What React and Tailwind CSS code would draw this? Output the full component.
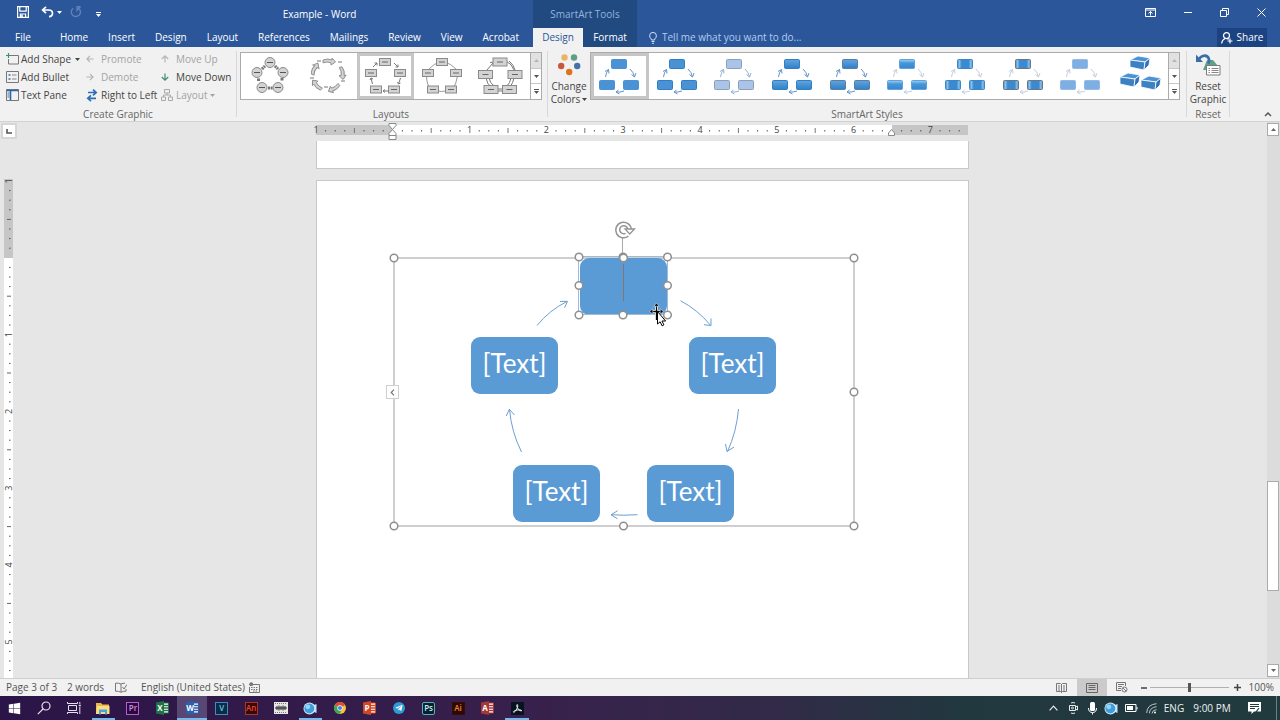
import { useState } from 'react';
import { FaWindows, FaTelegramPlane } from 'react-icons/fa';

const TABS = ['Home', 'Insert', 'Design', 'Layout', 'References', 'Mailings', 'Review', 'View', 'Acrobat'];

/* ---------- title bar icons ---------- */

function SaveIcon() {
  return (
    <svg width="12" height="12" viewBox="0 0 12 12" fill="none" stroke="#fff" strokeWidth="1.2">
      <path d="M.6.6h10.8v10.8H.6z" />
      <path d="M2.8.8v4.4h6.4V.8M3.4 11.2V8h5.2v3.2" />
      <path d="M5 8.6v2.4" strokeWidth="1.6" />
    </svg>
  );
}

function UndoIcon() {
  return (
    <svg width="13" height="12" viewBox="0 0 13 12" fill="none" stroke="#fff" strokeWidth="1.7">
      <path d="M5 .8 1.6 4 5 7.2M2 4h5.6c5.2 0 5 6.2.4 6.6" />
    </svg>
  );
}

function RedoIcon() {
  return (
    <svg width="12" height="12" viewBox="0 0 12 12" fill="none" stroke="#5f82ba" strokeWidth="1.4">
      <path d="M3.2 2.2A4.6 4.6 0 1 0 9 2.6M6.6.8h4M10.4.8 7 4.2V.8" />
    </svg>
  );
}

function Caret({ className = '' }) {
  return (
    <svg width="5" height="3" viewBox="0 0 5 3" className={className}>
      <path d="M0 0h5L2.500 3z" fill="currentColor" />
    </svg>
  );
}

/* ---------- ribbon icons ---------- */

function AddShapeIcon() {
  return (
    <svg width="13" height="12" viewBox="0 0 13 12" fill="none">
      <path d="M5 2.500h7.500v8.500h-10V6" stroke="#777" />
      <path d="M2.500 0v5M0 2.500h5" stroke="#3f8f6b" strokeWidth="1.2" />
    </svg>
  );
}

function AddBulletIcon() {
  return (
    <svg width="13" height="12" viewBox="0 0 13 12" fill="none">
      <path d="M.5.5h12v11H.5z" stroke="#777" />
      <path d="M2.500 4h2M2.500 8h2" stroke="#3f6fae" strokeWidth="1.6" />
      <path d="M6 4h4.500M6 8h4.500" stroke="#888" />
    </svg>
  );
}

function TextPaneIcon() {
  return (
    <svg width="13" height="12" viewBox="0 0 13 12" fill="none">
      <path d="M.5.5h12v11H.5z" stroke="#777" />
      <path d="M.5 1.500h12M4.500 1v10" stroke="#2f64a8" strokeWidth="1.6" />
      <path d="M1.500 4h2M1.500 6h2M1.500 8h2" stroke="#3f6fae" />
    </svg>
  );
}

function ArrowIcon({ turn, color }) {
  return (
    <svg width="8" height="8" viewBox="0 0 8 8" fill="none" stroke={color} strokeWidth="1.2">
      <path d="M7.500 4H1M4 .8.900 4 4 7.200" transform={`rotate(${turn} 4 4)`} />
    </svg>
  );
}

function RightToLeftIcon() {
  return (
    <svg width="12" height="13" viewBox="0 0 12 13" fill="none" stroke="#2f6db5" strokeWidth="1.7">
      <path d="M2 3.500h8M7 .6l3.200 2.900L7 6.400" />
      <path d="M10 9.300H2M5 6.400 1.800 9.300 5 12.200" />
    </svg>
  );
}

function OrgLayoutIcon() {
  return (
    <svg width="12" height="12" viewBox="0 0 12 12" fill="none" stroke="#a9a9a9">
      <path d="M3.500.5h5v3.500h-5zM.5 8h4v3.500h-4zM7.500 8h4v3.500h-4zM6 4v2M2.500 8V6h7v2" />
    </svg>
  );
}

function ChangeColorsIcon() {
  return (
    <svg width="24" height="24" viewBox="0 0 24 24">
      <circle cx="7.500" cy="4.500" r="3.200" fill="#e8b565" />
      <circle cx="17" cy="4.500" r="3.200" fill="#5f9f87" />
      <circle cx="4.200" cy="13" r="3.200" fill="#c9583b" />
      <circle cx="20.200" cy="13" r="3.200" fill="#4472a8" />
      <circle cx="12.200" cy="19" r="3.200" fill="#e0721f" />
    </svg>
  );
}

function ResetGraphicIcon() {
  return (
    <svg width="26" height="24" viewBox="0 0 26 24" fill="none">
      <path d="M12 7h6l5 6v4H8z" fill="#5fa184" />
      <path d="M3.500 7C6 2 12 .8 14 6c.6 2-.2 3.600-1 4.500" stroke="#3a6ea8" strokeWidth="2.600" />
      <path d="M1 1.500v7.500h7z" fill="#3a6ea8" />
      <path d="M11.500 12.500h13.500v9.500H11.500z" fill="#fff" stroke="#7a7a7a" />
      <path d="M13.500 15.500h1.500M16.500 15.500h7M13.500 17.500h1.500M16.500 17.500h7M13.500 19.500h1.500M16.500 19.500h7" stroke="#888" />
    </svg>
  );
}

/* ---------- layout gallery thumbnails ---------- */

function Boxes({ points, w, h }) {
  return points.map(([x, y]) => (
    <g key={`${x}-${y}`}>
      <rect x={x - w / 2} y={y - h / 2} width={w} height={h} fill="#d3d3d3" stroke="#8a8a8a" />
      <path d={`M${x - 3} ${y}h6`} stroke="#666" />
    </g>
  ));
}

function CircleCycle() {
  const dots = [[29, 9.5], [16, 19.5], [42, 19.5], [21, 34.5], [37, 34.5]];
  return (
    <>
      <path d="M21 16l3-3M34 13l3 3M17.500 28v-3M41 25v3M27 35h5" stroke="#777" strokeWidth="3" strokeDasharray="2 .6" />
      {dots.map(([x, y]) => (
        <g key={`${x}-${y}`}>
          <circle cx={x} cy={y} r="5" fill="#d3d3d3" stroke="#8a8a8a" />
          <path d={`M${x - 3} ${y}h6`} stroke="#555" />
        </g>
      ))}
    </>
  );
}

function ArrowCycle() {
  const arrow = 'M-6-1.500q5-2 9 0V-3.500L6.500.5 2 3.500V1.300q-4-1.600-8 0z';
  return (
    <>
      <g fill="#d3d3d3" stroke="#8a8a8a" strokeWidth=".9">
        <path d={arrow} transform="translate(30 8.500)" />
        <path d={arrow} transform="translate(43 20) rotate(76)" />
        <path d={arrow} transform="translate(35 35) rotate(144)" />
        <path d={arrow} transform="translate(18 32) rotate(222)" />
        <path d={arrow} transform="translate(16 16) rotate(292)" />
      </g>
      <path d="M18 8h4M39 9h4M11 25h4M42 28h4M25 34h4" stroke="#777" />
    </>
  );
}

function BasicCycle() {
  return (
    <>
      <g fill="none" stroke="#777">
        <path d="M16 14l4-4M20 12.500V10h-2.500M37 10l4 4M41 11.500V14h-2.500M43.500 25l-2 6M40.500 29l1 2 2-1M15.500 31l-1.500-6M13 27l1-2 2 1M31 38h-5M28 36.500 26 38l2 1.500" />
      </g>
      <Boxes points={[[28, 9], [14, 20], [43, 20], [19, 36.5], [37, 36.5]]} w={11} h={7} />
    </>
  );
}

function BlockCycle() {
  return (
    <>
      <path d="M15 16Q19 11 28 8q10 3 14 8M12.500 23q0 9 5 14 10 3 20 0 5-5 6-14" fill="none" stroke="#999" />
      <Boxes points={[[28, 9], [14, 20], [42, 20], [19, 36.5], [37, 36.5]]} w={11} h={7} />
    </>
  );
}

function ContinuousCycle() {
  return (
    <>
      <path d="M15 17l6-7M18 9.500l4-.5-1 4M34 8q6 3 8 9M37 8q5 4 6 9M14 25q1 6 5 9M17 25q1 5 5 8M42 25q-1 5-4 9M39 25q-1 5-4 8M25 38h8M25 36h8" fill="none" stroke="#777" />
      <Boxes points={[[28, 9], [13.5, 21.5], [43, 21.5], [19, 36.5], [37.500, 36.5]]} w={14} h={8} />
    </>
  );
}

const LAYOUTS = [
  { name: 'Basic Cycle', Art: CircleCycle },
  { name: 'Text Cycle', Art: ArrowCycle },
  { name: 'Nondirectional Cycle', Art: BasicCycle },
  { name: 'Block Cycle', Art: BlockCycle },
  { name: 'Continuous Cycle', Art: ContinuousCycle },
];

/* ---------- style gallery thumbnails ---------- */

const STYLES = [
  { name: 'Simple Fill', fill: '#4a92d4', stroke: '#4a92d4', arrow: '#5f95c8' },
  { name: 'White Outline', fill: '#4a92d4', stroke: '#2f7fc8', arrow: '#5f95c8' },
  { name: 'Subtle Effect', fill: '#a9c4e8', stroke: '#8e9fb8', arrow: '#8fb3d9' },
  { name: 'Moderate Effect', fill: 'url(#blueFade)', stroke: '#2f80c6', arrow: '#5f95c8' },
  { name: 'Intense Effect', fill: 'url(#blueFade)', stroke: '#5c7f9f', arrow: '#5f95c8' },
  { name: 'Polished', fill: 'url(#gloss)', stroke: '#5ba3dc', arrow: '#c3cede' },
  { name: 'Inset', fill: 'url(#edgeGloss)', stroke: '#3b86c8', arrow: '#c3cede' },
  { name: 'Cartoon', fill: 'url(#edgeGloss)', stroke: '#6b7681', arrow: '#c3cede' },
  { name: 'Powder', fill: '#7dafe4', stroke: '#94b9e4', arrow: '#c3cede' },
  { name: 'Brick Scene', brick: true },
];

function StyleArt({ fill, stroke, arrow, brick }) {
  if (brick) {
    return [[29, 10], [19, 27], [40, 30]].map(([x, y]) => (
      <g key={x} transform={`translate(${x} ${y})`}>
        <path d="M-9-3-1-7 11-5 6-1z" fill="#4d93d2" stroke="#fff" strokeWidth=".8" />
        <path d="M-9-3 6-1 5 7-9 4z" fill="#3c81c4" stroke="#fff" strokeWidth=".8" />
        <path d="M6-1 11-5 10 2 5 7z" fill="#3273b4" stroke="#fff" strokeWidth=".8" />
      </g>
    ));
  }
  return (
    <>
      {[[28, 11], [16, 32], [40, 32]].map(([x, y]) => (
        <rect key={x} x={x - 7.5} y={y - 4.5} width="15" height="9" rx="1" fill={fill} stroke={stroke} />
      ))}
      <path
        d="M14.500 24q.5-4.500 3-7.500M14 18.500l3.500-2 .5 4M39 16q3.500 3 4.500 8M40.500 21.500l3 2.500 1.500-4M33 38q-4 1.500-8 1M27.500 37 25 39l3.500 2"
        fill="none"
        stroke={arrow}
      />
    </>
  );
}

function Gradients() {
  return (
    <svg width="0" height="0" className="absolute">
      <defs>
        <linearGradient id="blueFade" x1="0" y1="0" x2="0" y2="1">
          <stop offset="0" stopColor="#62a5de" />
          <stop offset="1" stopColor="#2f7fc9" />
        </linearGradient>
        <linearGradient id="gloss" x1="0" y1="0" x2="0" y2="1">
          <stop offset="0" stopColor="#a4d0ef" />
          <stop offset=".4" stopColor="#4496da" />
          <stop offset="1" stopColor="#3b86cb" />
        </linearGradient>
        <linearGradient id="edgeGloss">
          <stop offset="0" stopColor="#3a83c6" />
          <stop offset=".12" stopColor="#8fc3ea" />
          <stop offset=".28" stopColor="#3b8ad0" />
          <stop offset=".75" stopColor="#3b8ad0" />
          <stop offset=".9" stopColor="#8fc3ea" />
          <stop offset="1" stopColor="#3a83c6" />
        </linearGradient>
      </defs>
    </svg>
  );
}

function Gallery({ items, active, onPick, render }) {
  return (
    <div className="flex h-[48px] min-w-0 flex-1 border border-[#ababab] bg-white">
      <div className="flex min-w-0 flex-1">
        {items.map((item, i) => (
          <button
            key={item.name}
            aria-label={item.name}
            onClick={() => onPick(i)}
            className={`flex min-w-0 flex-1 items-center justify-center border-3 ${
              i === active ? 'border-[#c6c6c6]' : 'border-transparent'
            }`}
          >
            <svg width="58" height="46" viewBox="0 0 58 46" className="shrink-0">
              {render(item)}
            </svg>
          </button>
        ))}
      </div>
      <div className="flex w-[11px] shrink-0 flex-col border-l border-[#ababab] text-[#555]">
        <button aria-label="Scroll up" className="flex flex-1 items-center justify-center bg-[#e1e1e1] text-[#b5b5b5]">
          <Caret className="rotate-180" />
        </button>
        <button aria-label="Scroll down" className="flex flex-1 items-center justify-center border-y border-[#c6c6c6]">
          <Caret />
        </button>
        <button aria-label="More" className="flex flex-1 flex-col items-center justify-center gap-px">
          <span className="h-px w-[5px] bg-[#555]" />
          <Caret />
        </button>
      </div>
    </div>
  );
}

function Command({ icon, label, disabled, caret }) {
  return (
    <button
      disabled={disabled}
      className="flex h-[18px] items-center whitespace-nowrap text-[#444] disabled:text-[#a3a3a3]"
    >
      <span className="flex w-[15px] shrink-0 items-center">{icon}</span>
      {label}
      {caret && <Caret className={caret} />}
    </button>
  );
}

function Separator() {
  return <div className="my-1 w-px shrink-0 bg-[#d8d8d8]" />;
}

function GroupLabel({ children }) {
  return <div className="mt-auto text-center leading-[13px] text-[#666]">{children}</div>;
}

function TitleBar() {
  return (
    <div className="flex h-7 text-[10px] text-white">
      <div className="flex w-[106px] shrink-0 items-center pb-1 pl-[17px]">
        <button aria-label="Save"><SaveIcon /></button>
        <button aria-label="Undo" className="ml-3"><UndoIcon /></button>
        <button aria-label="Undo history" className="ml-[3px]"><Caret /></button>
        <button aria-label="Redo" className="ml-2"><RedoIcon /></button>
        <button aria-label="Customize" className="ml-[14px] flex flex-col items-center gap-px pt-1">
          <span className="h-px w-[5px] bg-white" />
          <Caret />
        </button>
      </div>
      <div className="w-[427px] shrink-0 text-center leading-7">Example - Word</div>
      <div className="w-[104px] shrink-0 bg-[#214a80] text-center leading-7 text-[#94b4de]">SmartArt Tools</div>
      <div className="flex flex-1 items-center justify-end pb-1">
        <button aria-label="Ribbon display options" className="flex w-[37px] justify-center">
          <svg width="11" height="9" viewBox="0 0 11 9" fill="none" stroke="#fff">
            <path d="M.5.5h10v8H.5zM.5 2h10M5.500 7.500v-4M3.500 5.500l2-2 2 2" />
          </svg>
        </button>
        <button aria-label="Minimize" className="flex w-[37px] justify-center">
          <span className="h-px w-2 bg-white" />
        </button>
        <button aria-label="Restore" className="flex w-[37px] justify-center">
          <svg width="9" height="9" viewBox="0 0 9 9" fill="none" stroke="#fff">
            <path d="M.5 2.500h6v6h-6zM2.500 2.500v-2h6v6h-2" />
          </svg>
        </button>
        <button aria-label="Close" className="flex w-[37px] justify-center">
          <svg width="9" height="9" viewBox="0 0 9 9" fill="none" stroke="#fff">
            <path d="M.5.5l8 8M8.500.5l-8 8" />
          </svg>
        </button>
      </div>
    </div>
  );
}

function TabBar() {
  return (
    <div className="flex h-[19px] text-[10px] leading-[19px] text-white">
      <div className="flex w-[533px] shrink-0 justify-between pr-[14px]">
        <button className="w-[40px] pl-[15px] text-left">File</button>
        {TABS.map((tab) => (
          <button key={tab}>{tab}</button>
        ))}
      </div>
      <button className="w-[50px] shrink-0 bg-[#f1f1f1] text-[#2b579a]">Design</button>
      <button className="w-[54px] shrink-0 bg-[#214a80]">Format</button>
      <label className="flex items-center gap-[5px] pl-3 text-[#b4cbee]">
        <svg width="8" height="12" viewBox="0 0 8 12" fill="none" stroke="#cfe0f8">
          <path d="M2.500 8C2.500 6.500.6 6 .6 3.800a3.400 3.400 0 0 1 6.800 0C7.400 6 5.500 6.500 5.500 8zM2.500 9.500h3M3 11.300h2" />
        </svg>
        <input
          aria-label="Tell me what you want to do"
          placeholder="Tell me what you want to do..."
          className="w-[150px] bg-transparent placeholder:text-[#b4cbee]"
        />
      </label>
      <button className="mr-[13px] ml-auto flex w-[50px] items-center justify-center gap-1 bg-[#1b4381]">
        <svg width="12" height="12" viewBox="0 0 12 12" fill="none" stroke="#fff" strokeWidth="1.2">
          <circle cx="5.500" cy="3.600" r="3" />
          <path d="M.6 11.500Q1 8 4 6.500M9 6.500v5M6.500 9h5M6.500 6.500l1 1" />
        </svg>
        Share
      </button>
    </div>
  );
}

function Ribbon() {
  const [layout, setLayout] = useState(2);
  const [style, setStyle] = useState(0);

  return (
    <div className="flex h-[75px] shrink-0 border-b border-[#d2d2d2] bg-[#f1f1f1] text-[10px]">
      <div className="flex w-[236px] shrink-0 flex-col pt-[3px]">
        <div className="flex pl-[6px]">
          <div className="w-[80px]">
            <Command icon={<AddShapeIcon />} label="Add Shape" caret="ml-[4px]" />
            <Command icon={<AddBulletIcon />} label="Add Bullet" />
            <Command icon={<TextPaneIcon />} label="Text Pane" />
          </div>
          <div className="w-[75px]">
            <Command icon={<ArrowIcon turn={0} color="#b5b5b5" />} label="Promote" disabled />
            <Command icon={<ArrowIcon turn={180} color="#b5b5b5" />} label="Demote" disabled />
            <Command icon={<RightToLeftIcon />} label="Right to Left" />
          </div>
          <div>
            <Command icon={<ArrowIcon turn={90} color="#b5b5b5" />} label="Move Up" disabled />
            <Command icon={<ArrowIcon turn={270} color="#3f8f6b" />} label="Move Down" />
            <Command icon={<OrgLayoutIcon />} label="Layout" disabled caret="ml-[2px]" />
          </div>
        </div>
        <GroupLabel>Create Graphic</GroupLabel>
      </div>
      <Separator />
      <div className="flex w-[310px] shrink-0 flex-col pt-[5px] pr-[5px] pl-[3px]">
        <div className="flex">
          <Gallery items={LAYOUTS} active={layout} onPick={setLayout} render={({ Art }) => <Art />} />
        </div>
        <GroupLabel>Layouts</GroupLabel>
      </div>
      <Separator />
      <div className="flex min-w-0 flex-1 flex-col pt-[5px]">
        <div className="flex items-start pr-[6px]">
          <button className="flex w-[42px] shrink-0 flex-col items-center pt-px leading-[13px] text-[#444]">
            <ChangeColorsIcon />
            <span className="pt-[3px]">Change</span>
            <span className="flex items-center gap-[2px]">Colors <Caret /></span>
          </button>
          <Gallery items={STYLES} active={style} onPick={setStyle} render={(item) => <StyleArt {...item} />} />
        </div>
        <GroupLabel>SmartArt Styles</GroupLabel>
      </div>
      <Separator />
      <div className="flex w-[42px] shrink-0 flex-col pt-[5px]">
        <button className="flex flex-col items-center pt-px leading-[13px] text-[#444]">
          <ResetGraphicIcon />
          <span className="pt-[3px]">Reset</span>
          <span>Graphic</span>
        </button>
        <GroupLabel>Reset</GroupLabel>
      </div>
      <Separator />
      <div className="flex w-[50px] shrink-0 items-end justify-end pr-2 pb-1">
        <button aria-label="Collapse the ribbon">
          <svg width="8" height="6" viewBox="0 0 8 6" fill="none" stroke="#555" strokeWidth="1.500">
            <path d="M1 5l3-3 3 3" />
          </svg>
        </button>
      </div>
    </div>
  );
}

/* ---------- rulers ---------- */

const STEP = 9.6;

function HorizontalRuler() {
  const marks = Array.from({ length: 68 }, (_, i) => i).filter((i) => i !== 8 && i !== 60);
  return (
    <svg width="653" height="10" className="block shrink-0 overflow-visible">
      <rect width="652" height="10" fill="#c6c6c6" />
      <rect x="76" width="500" height="10" fill="#fff" />
      {marks.map((i) => {
        const x = i * STEP;
        if (i % 8 === 0) {
          return (
            <text key={i} x={x} y="8" textAnchor="middle" fontSize="9" fill="#444">
              {Math.abs(i / 8 - 1)}
            </text>
          );
        }
        return i % 8 === 4
          ? <path key={i} d={`M${x} 3v5`} stroke="#777" />
          : <path key={i} d={`M${x} 5v1.500`} stroke="#555" />;
      })}
      <g fill="#fff" stroke="#888">
        <path d="M73-1.500h7v2l-3.500 4-3.500-4zM76.500 4.500l3.500 4v2h-7v-2zM73 10.500h7v4h-7z" />
        <path d="M575.500 4.500l3 3.500v2.500h-6V8z" />
      </g>
    </svg>
  );
}

function VerticalRuler() {
  const marks = Array.from({ length: 52 }, (_, i) => i).filter((i) => i !== 8);
  return (
    <div className="min-h-0 flex-1 overflow-hidden pt-2 pl-1">
      <svg width="9" height="1060" className="block overflow-visible">
        <rect width="9" height="1060" fill="#fff" />
        <rect width="9" height="79" fill="#c6c6c6" />
        {marks.map((i) => {
          const y = 2 + i * STEP;
          if (i % 8 === 0) {
            return (
              <text key={i} x="8" y={y} transform={`rotate(-90 8 ${y})`} textAnchor="middle" fontSize="9" fill="#444">
                {Math.abs(i / 8 - 1)}
              </text>
            );
          }
          return i % 8 === 4
            ? <path key={i} d={`M3 ${y}h4`} stroke="#666" />
            : <path key={i} d={`M5 ${y}h1.500`} stroke="#555" />;
        })}
      </svg>
    </div>
  );
}

/* ---------- diagram ---------- */

const NODES = [
  { text: '', pos: 'left-[263px] top-[77px]' },
  { text: '[Text]', pos: 'left-[372px] top-[156px]' },
  { text: '[Text]', pos: 'left-[330px] top-[284px]' },
  { text: '[Text]', pos: 'left-[196px] top-[284px]' },
  { text: '[Text]', pos: 'left-[154px] top-[156px]' },
];

const FRAME_HANDLES = [[394, 258], [854, 258], [854, 392], [854, 526], [623.5, 526], [394, 526]];
const NODE_HANDLES = [
  [579, 257], [623, 257], [667.5, 257],
  [579, 285.5], [667.5, 285.5],
  [579, 315], [623, 315], [667.5, 315],
];

function Diagram() {
  return (
    <>
      <div className="absolute top-[76px] left-[76px] h-[270px] w-[462px] border-2 border-[#cfcfcf]" />
      {NODES.map(({ text, pos }) => (
        <div
          key={pos}
          className={`absolute flex h-[57px] w-[87px] items-center justify-center rounded-[9px] bg-[#5b9bd5] pb-[5px] font-['Lato',sans-serif] text-[26px] leading-8 text-white ${pos}`}
        >
          {text}
        </div>
      ))}
      <svg
        width="651"
        height="496"
        viewBox="317 181 651 496"
        fill="none"
        className="pointer-events-none absolute top-0 left-0"
      >
        <g stroke="#6ba0d0">
          <path d="M537 325.500q12-15 30-24M560 301.500l7.500-.2-3 6.500" />
          <path d="M680.500 300.700q17 9 30 24.500M711 318.500v7l-7-.8" />
          <path d="M738.500 409q-2 23-11 42.500M725.500 444l1.500 7.500 7-4.500" />
          <path d="M637.500 514.700q-14 1-26.500 0M617.500 510.800l-6.500 4 6.500 4" />
          <path d="M521.500 452q-10-20-12-42.500M506.300 416l3-6.700 5.200 5.700" />
        </g>
        <path d="M578.500 256.500h89v58h-89z" stroke="#fff" />
        <path d="M578.500 256.500h89v58h-89z" stroke="#3f78ab" strokeDasharray="1 1" />
        <path d="M623.500 264v37" stroke="#85756c" />
        <path d="M622.500 238v18" stroke="#ababab" />

        {/* rotate handle */}
        <path d="M628.500 236a7.800 7.800 0 1 1 2.800-6.500" stroke="#949494" strokeWidth="1.500" />
        <path d="M625.500 233.300a4 4 0 1 1 2.200-3.600" stroke="#949494" strokeWidth="1.500" />
        <path d="M625 229h9.500l-4.700 5z" fill="#fff" stroke="#949494" strokeWidth="1.300" />

        <g fill="#fff" stroke="#8f8f8f" strokeWidth="1.500">
          {NODE_HANDLES.map(([x, y]) => (
            <circle key={`${x}-${y}`} cx={x} cy={y} r="3.800" />
          ))}
          {FRAME_HANDLES.map(([x, y]) => (
            <circle key={`${x}-${y}`} cx={x} cy={y} r="3.800" />
          ))}
          <circle cx="623.500" cy="258" r="3.800" />
        </g>

        {/* move pointer */}
        <g stroke="#fff" strokeWidth="3">
          <path d="M656.500 305v14M651 311.500h11" />
        </g>
        <path d="M656.500 306v14M651 311.500h11" stroke="#000" strokeWidth="1.300" />
        <path d="M656.500 303l2.600 3.300h-5.200zM649.500 311.500l3.300-2.600v5.200zM663.500 311.500l-3.300-2.600v5.200z" fill="#000" stroke="#fff" strokeWidth=".5" />
        <path d="M657.500 311.500v12.500l2.600-2.200 2 4 1.800-.9-1.900-3.900h3.600z" fill="#fff" stroke="#000" />
      </svg>
      <button
        aria-label="Open text pane"
        className="absolute top-[204px] left-[69px] flex h-[14px] w-[13px] items-center justify-center border border-[#cfcfcf] bg-white"
      >
        <svg width="5" height="7" viewBox="0 0 5 7" fill="none" stroke="#777" strokeWidth="1.200">
          <path d="M4 .6 1.200 3.500 4 6.400" />
        </svg>
      </button>
    </>
  );
}

function Workspace() {
  return (
    <div className="flex min-h-0 flex-1 bg-[#e6e6e6]">
      <div className="flex w-[18px] shrink-0 flex-col pt-px">
        <button
          aria-label="Tab selector"
          className="mb-8 flex h-4 w-4 shrink-0 items-center justify-center self-center border-2 border-[#d6d6d6] bg-white"
        >
          <svg width="6" height="5" viewBox="0 0 6 5" fill="none" stroke="#555" strokeWidth="1.600">
            <path d="M1 0v4h5" />
          </svg>
        </button>
        <VerticalRuler />
      </div>

      <div className="flex min-w-0 flex-1 flex-col items-center overflow-hidden pt-[3px]">
        <HorizontalRuler />
        <div className="mt-[6px] h-[28px] w-[653px] shrink-0 border border-t-0 border-[#c8c8c8] bg-white" />
        <div className="relative mt-[11px] min-h-0 w-[653px] flex-1 overflow-hidden border border-b-0 border-[#c8c8c8] bg-white">
          <Diagram />
        </div>
      </div>

      <div className="flex w-[13px] shrink-0 flex-col bg-[#dcdcdc] py-px pr-px text-[#666]">
        <button aria-label="Scroll up" className="flex h-[13px] items-center justify-center border border-[#ababab] bg-white">
          <Caret className="rotate-180" />
        </button>
        <div className="flex-[346]" />
        <div className="h-[110px] border border-[#ababab] bg-white" />
        <div className="flex-[73]" />
        <button aria-label="Scroll down" className="flex h-[13px] items-center justify-center border border-[#ababab] bg-white">
          <Caret />
        </button>
      </div>
    </div>
  );
}

function StatusBar() {
  const [zoom, setZoom] = useState(50);
  return (
    <div className="flex h-[18px] shrink-0 items-center border-t border-[#cfcfcf] bg-[#f1f1f1] pr-[6px] pl-[6px] text-[10px] whitespace-nowrap text-[#555]">
      <div className="w-[61px]">Page 3 of 3</div>
      <div className="w-[48px]">2 words</div>
      <button aria-label="Proofing" className="w-[26px]">
        <svg width="12" height="11" viewBox="0 0 12 11" fill="none" stroke="#777">
          <path d="M6 2v8M6 2Q4 .8.500 1.200v8Q4 9 6 10.300 8 9 11 9.200V7M6 2q2-1 4-.8M7.500 5l1.500 2L12 2.500" />
        </svg>
      </button>
      <div className="w-[108px]">English (United States)</div>
      <button aria-label="Macro recording">
        <svg width="11" height="11" viewBox="0 0 11 11" fill="none" stroke="#777">
          <path d="M4 2.500h6.500v8H.5V5" />
          <circle cx="2.200" cy="2.200" r="2" fill="#777" stroke="none" />
          <path d="M2 5.500h7M2 7.500h7M4 9h5" strokeDasharray="1.500 1" />
        </svg>
      </button>
      <div className="ml-auto flex h-full items-center">
        <button aria-label="Read mode" className="flex h-full w-[31px] items-center justify-center">
          <svg width="11" height="10" viewBox="0 0 11 10" fill="none" stroke="#777">
            <path d="M5.500 1v9M.5.5h4l1 1 1-1h4v8h-4l-1 1-1-1h-4zM2 3h2M2 5h2M2 7h2M7 3h2M7 5h2M7 7h2" />
          </svg>
        </button>
        <button aria-label="Print layout" className="flex h-full w-[30px] items-center justify-center bg-[#cbcbcb]">
          <svg width="12" height="10" viewBox="0 0 12 10" fill="none" stroke="#666">
            <path d="M.5.5h11v9H.5zM2.500 2.500h7M2.500 4.500h7M2.500 6.500h7" />
          </svg>
        </button>
        <button aria-label="Web layout" className="flex h-full w-[29px] items-center justify-center">
          <svg width="12" height="11" viewBox="0 0 12 11" fill="none" stroke="#777">
            <path d="M5 8.500H.5v-8h9V4M2 2.500h6M2 4.500h4M2 6.500h3" />
            <circle cx="8.500" cy="7.500" r="2.500" />
            <path d="M7 6l3 3" />
          </svg>
        </button>
        <button aria-label="Zoom out" className="flex w-3 justify-center pl-1">
          <svg width="6" height="2"><path d="M0 1h6" stroke="#444" strokeWidth="1.500" /></svg>
        </button>
        <input
          type="range"
          aria-label="Zoom"
          value={zoom}
          onChange={(e) => setZoom(e.target.value)}
          className="mx-[2px] h-3 w-[79px] appearance-none bg-[linear-gradient(#b0b0b0,#b0b0b0)] bg-[length:100%_1px] bg-center bg-no-repeat [&::-webkit-slider-thumb]:h-[9px] [&::-webkit-slider-thumb]:w-[3px] [&::-webkit-slider-thumb]:appearance-none [&::-webkit-slider-thumb]:bg-[#555]"
        />
        <button aria-label="Zoom in" className="flex w-3 justify-center">
          <svg width="7" height="7"><path d="M0 3.500h7M3.500 0v7" stroke="#444" strokeWidth="1.500" /></svg>
        </button>
        <div className="w-[31px] text-right">100%</div>
      </div>
    </div>
  );
}

/* ---------- taskbar ---------- */

function Tile({ text, className }) {
  return (
    <span className={`flex h-[13px] w-[13px] items-center justify-center border text-[8px] leading-none font-semibold ${className}`}>
      {text}
    </span>
  );
}

function OfficeIcon({ letter, color }) {
  return (
    <svg width="13" height="14" viewBox="0 0 13 14">
      <path d="M7 2h5.500v10H7z" fill="#fff" stroke={color} />
      <path d="M8 4.500h4M8 7h4M8 9.500h4" stroke={color} strokeWidth="1.300" />
      <path d="M0 1.500 8 0v14L0 12.500z" fill={color} />
      <text x="4" y="10" textAnchor="middle" fontSize="8" fontWeight="700" fill="#fff">{letter}</text>
    </svg>
  );
}

function SearchIcon() {
  return (
    <svg width="14" height="14" viewBox="0 0 14 14" fill="none" stroke="#e8e2f0" strokeWidth="1.200">
      <circle cx="9" cy="5" r="4" />
      <path d="M6 8 .8 13.200" />
    </svg>
  );
}

function TaskViewIcon() {
  return (
    <svg width="14" height="12" viewBox="0 0 14 12" fill="none" stroke="#e8e2f0">
      <path d="M1.500 3.500h8v5h-8zM.5 0v1.500h10V0M.5 12v-1.500h10V12M12.800 0v2M12.800 5v7" />
      <path d="M11.800 3.500h2" strokeWidth="1.600" />
    </svg>
  );
}

function FolderIcon() {
  return (
    <svg width="14" height="13" viewBox="0 0 14 13">
      <path d="M0 1h5l1.500 1.500H13V12H0z" fill="#e9b949" />
      <path d="M1 4h12.500v8H0z" fill="#fbdc83" />
      <path d="M3 12.500V7.500h8v5H9V10H5v2.500z" fill="#4aa3dc" />
    </svg>
  );
}

function CameraBall() {
  return (
    <svg width="14" height="13" viewBox="0 0 14 13">
      <path d="M10 3.500 13.500 2v9L10 9.500z" fill="#bfe4f8" />
      <circle cx="6.500" cy="6.500" r="6" fill="#d3ecfa" />
      <circle cx="6.300" cy="6.500" r="5" fill="#3f9fde" />
      <circle cx="4.800" cy="4.800" r="2.400" fill="#9ad4f5" />
    </svg>
  );
}

function ChromeIcon() {
  return (
    <svg width="12" height="12" viewBox="0 0 12 12">
      <circle cx="6" cy="6" r="6" fill="#f3c433" />
      <path d="M6 6 .8 3A6 6 0 0 1 11.200 3z" fill="#de4b3c" />
      <path d="M6 6 .8 3A6 6 0 0 0 5.600 12L8 7z" fill="#3fa35a" />
      <circle cx="6" cy="6" r="2.700" fill="#fff" />
      <circle cx="6" cy="6" r="2.100" fill="#4a86e0" />
    </svg>
  );
}

function SubtitleIcon() {
  return (
    <svg width="14" height="12" viewBox="0 0 14 12">
      <path d="M0 0h14v12H0z" fill="#e6e6e6" />
      <path d="M1 1.500h12M1 10.500h12" stroke="#777" strokeDasharray="1 1" />
      <path d="M1 6h12M3 4v4M5 3.500v5M7 4v4M9 3.500v5M11 4v4" stroke="#222" />
    </svg>
  );
}

function AcrobatIcon() {
  return (
    <svg width="13" height="13" viewBox="0 0 13 13" fill="none">
      <path d="M0 0h13v13H0z" fill="#07131f" />
      <path d="M6 2.500q1.500 0 .5 3Q5 9 2.800 10.500 1.500 10 3.500 8.800 6.500 7.500 10 8q1.500.8 0 1-2.500-.5-4-4-.6-2.500 0-2.500z" stroke="#fff" strokeWidth=".9" />
    </svg>
  );
}

const APPS = [
  { name: 'Start', icon: <FaWindows size={13} color="#fff" /> },
  { name: 'Search', icon: <SearchIcon /> },
  { name: 'Task View', icon: <TaskViewIcon /> },
  { name: 'File Explorer', icon: <FolderIcon />, open: true },
  { name: 'Premiere Pro', icon: <Tile text="Pr" className="border-[#b45fd0] bg-[#2c0a3c] text-[#d58ae8]" /> },
  { name: 'Excel', icon: <OfficeIcon letter="X" color="#1f7246" /> },
  { name: 'Word', icon: <OfficeIcon letter="W" color="#2b5fb0" />, focused: true },
  { name: 'VEGAS', icon: <Tile text="V" className="border-[#3d8ec0] bg-[#0b2c44] text-[#69c4ee]" /> },
  { name: 'Animate', icon: <Tile text="An" className="border-[#a93428] bg-[#3a0808] text-[#e04a35]" /> },
  { name: 'Subtitle Edit', icon: <SubtitleIcon /> },
  { name: 'Recorder', icon: <CameraBall />, open: true },
  { name: 'Chrome', icon: <ChromeIcon /> },
  { name: 'PowerPoint', icon: <OfficeIcon letter="P" color="#d04727" /> },
  {
    name: 'Telegram',
    icon: (
      <span className="flex h-3 w-3 items-center justify-center rounded-full bg-[#2f9bd6]">
        <FaTelegramPlane size={8} color="#fff" />
      </span>
    ),
  },
  { name: 'Photoshop', icon: <Tile text="Ps" className="rounded-xs border-[#4fb3bf] bg-[#06202c] text-[#c8eef5]" /> },
  { name: 'Illustrator', icon: <Tile text="Ai" className="border-[#3a0b05] bg-[#2d0805] text-[#f08a24]" /> },
  { name: 'Access', icon: <OfficeIcon letter="A" color="#a4373a" /> },
  { name: 'Acrobat', icon: <AcrobatIcon />, open: true },
];

function Taskbar() {
  return (
    <div className="flex h-6 shrink-0 bg-[linear-gradient(90deg,#2b1447_0%,#38204c_40%,#322a48_60%,#21383f_75%,#213a3d_100%)] text-[10px] text-[#eef2f2]">
      <div className="grid w-[532px] shrink-0 grid-cols-18">
        {APPS.map(({ name, icon, open, focused }) => (
          <button
            key={name}
            aria-label={name}
            className={`flex items-center justify-center border-b-2 pt-[2px] ${
              focused ? 'border-[#76b9ed] bg-[#584673]' : open ? 'mx-[3px] border-[#76b9ed]' : 'border-transparent'
            }`}
          >
            {icon}
          </button>
        ))}
      </div>
      <div className="ml-auto flex items-center">
        <button aria-label="Hidden icons" className="flex w-5 justify-center">
          <svg width="9" height="6" viewBox="0 0 9 6" fill="none" stroke="#e6ecec" strokeWidth="1.200">
            <path d="M.6 5.300 4.500 1.200l3.900 4.100" />
          </svg>
        </button>
        <button aria-label="Screen recorder" className="flex w-5 justify-center">
          <svg width="9" height="12" viewBox="0 0 9 12" fill="none" stroke="#e6ecec">
            <path d="M.5 3.500h6v5h-6zM6.500 5 8.500 4v4l-2-1M2 1q2-1 4 0M2 11q2 1 4 0" />
            <circle cx="3.500" cy="6" r="1" />
          </svg>
        </button>
        <button aria-label="Microphone" className="flex w-[18px] justify-center">
          <svg width="9" height="13" viewBox="0 0 9 13" fill="none" stroke="#fff">
            <rect x="2" y="0" width="5" height="9" rx="1.500" fill="#fff" stroke="none" />
            <path d="M.5 6q0 4.500 4 4.500t4-4.500M4.500 10.500v2" />
          </svg>
        </button>
        <button aria-label="Recorder" className="flex w-5 justify-center"><CameraBall /></button>
        <button aria-label="Battery" className="flex w-5 justify-center">
          <svg width="13" height="8" viewBox="0 0 13 8">
            <path d="M.5.5h10.500v7H.5zM12 3v2.500" fill="none" stroke="#fff" />
            <path d="M2 2h6v4H2z" fill="#fff" />
          </svg>
        </button>
        <button aria-label="Network" className="flex w-5 justify-center">
          <svg width="11" height="11" viewBox="0 0 11 11" fill="none" stroke="#b9c6c6">
            <path d="M.7 10Q1 1.500 10.500.7M3.400 10.300Q3.700 4.500 10.500 3.700M6 10.500q.3-3.500 4.500-3.900" />
            <circle cx="9" cy="9.500" r="1" fill="#fff" stroke="none" />
          </svg>
        </button>
        <div className="w-[26px] text-center">ENG</div>
        <div className="w-[50px] text-center">9:00 PM</div>
        <button aria-label="Notifications" className="flex w-[34px] justify-center">
          <svg width="13" height="12" viewBox="0 0 13 12">
            <path d="M0 0h13v9.500H6L3.500 12V9.500H0z" fill="#fff" />
            <path d="M2 2.500h9M2 4.500h9M2 6.500h5" stroke="#213a3d" />
            <path d="M8 10l3-4" stroke="#213a3d" strokeWidth="1.200" />
          </svg>
        </button>
        <div className="mr-[3px] ml-[5px] h-6 w-px bg-[#6d7f81]" />
      </div>
    </div>
  );
}

export default function App() {
  return (
    <div className="flex h-screen flex-col overflow-hidden font-['Open_Sans','Noto_Sans',sans-serif]">
      <Gradients />
      <header className="shrink-0 bg-[#2b579a]">
        <TitleBar />
        <TabBar />
      </header>
      <Ribbon />
      <Workspace />
      <StatusBar />
      <Taskbar />
    </div>
  );
}
